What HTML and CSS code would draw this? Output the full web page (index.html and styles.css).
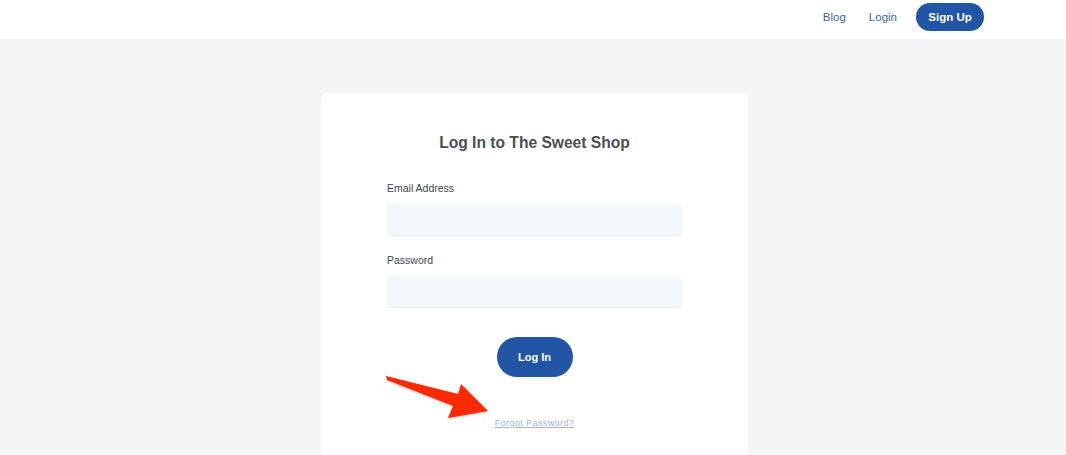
FILE: index.html
```html
<!DOCTYPE html>
<html lang="en">
<head>
<meta charset="utf-8">
<title>Log In to The Sweet Shop</title>
<link rel="stylesheet" href="styles.css">
</head>
<body>
<header class="topbar">
  <nav class="nav">
    <a class="nav-link" href="#">Blog</a>
    <a class="nav-link" href="#">Login</a>
    <a class="nav-btn" href="#">Sign Up</a>
  </nav>
</header>
<main class="main">
  <section class="card">
    <h1 class="title">Log In to The Sweet Shop</h1>
    <form class="form">
      <label class="field">
        <span class="label">Email Address</span>
        <input class="input" type="email">
      </label>
      <label class="field">
        <span class="label">Password</span>
        <input class="input" type="password">
      </label>
      <button class="submit" type="button">Log In</button>
      <a class="forgot" href="#">Forgot Password?</a>
    </form>
  </section>
</main>
<svg class="arrow" width="1066" height="455" viewBox="0 0 1066 455">
  <defs>
    <filter id="sh" x="-20%" y="-20%" width="140%" height="140%">
      <feDropShadow dx="0" dy="1" stdDeviation="1" flood-color="#000" flood-opacity="0.25"/>
    </filter>
  </defs>
  <polygon filter="url(#sh)" fill="#ff2a00" points="386,376 458,394 461,384 488,411 448,418 453,406 387,380"/>
</svg>
</body>
</html>
```
FILE: styles.css
```css
* { box-sizing: border-box; }
html, body { margin: 0; padding: 0; }
body {
  width: 1066px;
  height: 455px;
  overflow: hidden;
  background: #f4f5f7;
  font-family: "Liberation Sans", Arial, sans-serif;
  position: relative;
}
.topbar {
  height: 39px;
  background: #fff;
  display: flex;
  justify-content: flex-end;
  align-items: center;
  padding-right: 82px;
  padding-bottom: 5px;
}
.nav {
  display: flex;
  align-items: center;
}
.nav-link {
  color: #44659e;
  font-size: 11.5px;
  text-decoration: none;
  margin-right: 23px;
}
.nav-link + .nav-link {
  margin-right: 19px;
}
.nav-btn {
  display: inline-flex;
  align-items: center;
  justify-content: center;
  width: 68px;
  height: 28px;
  border-radius: 14px;
  background: #2355a6;
  color: #fff;
  font-weight: bold;
  font-size: 11.5px;
  text-decoration: none;
}
.main {
  display: flex;
  justify-content: center;
  padding-top: 54px;
  padding-left: 3px;
}
.card {
  width: 427px;
  height: 400px;
  background: #fff;
  border-radius: 5px;
  padding: 41px 66px 0;
}
.title {
  margin: 0;
  text-align: center;
  font-size: 15.6px;
  font-weight: bold;
  color: #4a5058;
}
.form {
  display: flex;
  flex-direction: column;
  align-items: center;
  padding-top: 30px;
}
.field {
  display: flex;
  flex-direction: column;
  width: 100%;
  margin-bottom: 19px;
}
.label {
  font-size: 10.5px;
  color: #3b4656;
  margin-bottom: 10px;
}
.input {
  width: 100%;
  height: 31px;
  border: 0;
  border-radius: 3px;
  background: #f2f7fa;
  box-shadow: 0 1px 0 #e8eef2;
  outline: none;
}
.submit {
  margin-top: 11px;
  width: 76px;
  height: 40px;
  border: 0;
  border-radius: 20px;
  background: #2355a6;
  color: #fff;
  font-family: inherit;
  font-weight: bold;
  font-size: 11px;
}
.forgot {
  margin-top: 41px;
  font-size: 9px;
  color: #a7b4c6;
  text-decoration: underline;
  letter-spacing: 0.4px;
}
.arrow {
  position: absolute;
  left: 0;
  top: 0;
  pointer-events: none;
}
```
